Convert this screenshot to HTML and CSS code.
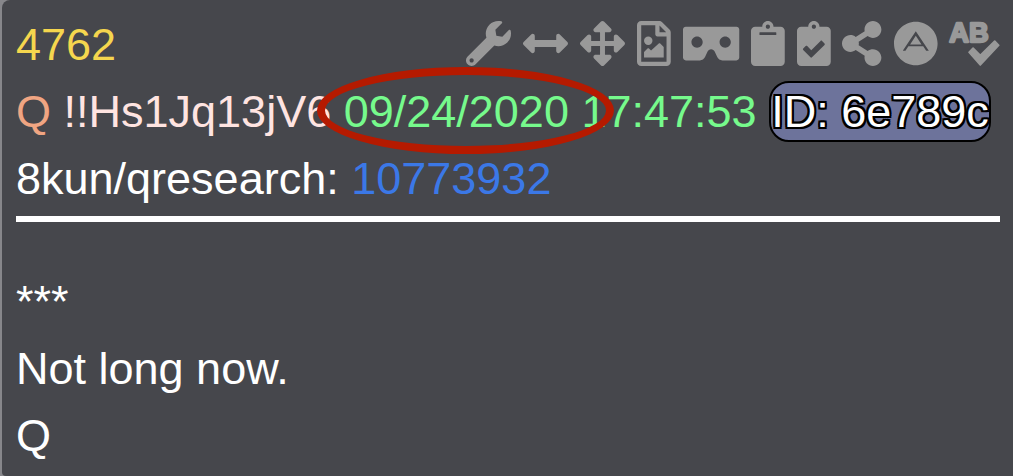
FILE: index.html
```
<!DOCTYPE html>
<html lang="en">
<head>
  <meta charset="UTF-8" />
  <meta name="viewport" content="width=device-width, initial-scale=1.0"/>
  <title>4762</title>
  <link rel="stylesheet" href="styles.css">
</head>
<body>
  <article class="post">
    <header class="post-header">
      <div class="top-row">
        <span class="number">4762</span>
        <div class="tools">
          <button type="button" aria-label="Settings">
            <svg viewBox="0 0 512 512"><path d="M507.73 109.1c-2.24-9.03-13.54-12.09-20.12-5.51l-74.36 74.36-67.88-11.31-11.31-67.88 74.36-74.36c6.62-6.62 3.43-17.9-5.66-20.16-47.38-11.74-99.55.91-136.58 37.93-39.64 39.64-50.55 97.1-34.05 147.2L18.74 402.76c-24.99 24.99-24.99 65.51 0 90.5 24.99 24.99 65.51 24.99 90.5 0l213.21-213.21c50.12 16.71 107.47 5.68 147.37-34.22 37.07-37.07 49.7-89.32 37.91-136.73zM64 472c-13.25 0-24-10.75-24-24 0-13.26 10.75-24 24-24s24 10.74 24 24c0 13.25-10.75 24-24 24z"/></svg>
          </button>
          <button type="button" aria-label="Widen">
            <svg viewBox="0 0 512 512"><path d="M377.941 169.941V216H134.059v-46.059c0-21.382-25.851-32.09-40.971-16.971L7.029 239.029c-9.373 9.373-9.373 24.568 0 33.941l86.059 86.059c15.119 15.119 40.971 4.411 40.971-16.971V296h243.882v46.059c0 21.382 25.851 32.09 40.971 16.971l86.059-86.059c9.373-9.373 9.373-24.568 0-33.941l-86.059-86.059c-15.119-15.12-40.971-4.412-40.971 16.97z"/></svg>
          </button>
          <button type="button" aria-label="Move">
            <svg viewBox="0 0 512 512"><path d="M352.201 425.775l-79.196 79.196c-9.373 9.373-24.568 9.373-33.941 0l-79.196-79.196c-15.119-15.119-4.411-40.971 16.971-40.97h51.162L228 284H127.196v51.162c0 21.382-25.851 32.09-40.971 16.971L7.029 272.937c-9.373-9.373-9.373-24.569 0-33.941L86.225 159.8c15.119-15.119 40.971-4.411 40.971 16.971V228H228V127.196h-51.23c-21.382 0-32.09-25.851-16.971-40.971l79.196-79.196c9.373-9.373 24.568-9.373 33.941 0l79.196 79.196c15.119 15.119 4.411 40.971-16.971 40.971h-51.162V228h100.804v-51.162c0-21.382 25.851-32.09 40.97-16.971l79.196 79.196c9.373 9.373 9.373 24.569 0 33.941L425.773 352.2c-15.119 15.119-40.971 4.411-40.97-16.971V284H284v100.804h51.23c21.382 0 32.09 25.851 16.971 40.971z"/></svg>
          </button>
          <button type="button" aria-label="Save as image">
            <svg viewBox="0 0 384 512"><path d="M369.9 97.98L286.02 14.1c-9-9-21.2-14.1-33.89-14.1H47.99C21.5.1 0 21.6 0 48.09v415.92C0 490.5 21.5 512 47.99 512h288.02c26.49 0 47.99-21.5 47.99-47.99V131.97c0-12.69-5.1-24.99-14.1-33.99zM256.03 51.99l76.08 76.08h-76.08V51.99zM336 464H48V48.09h160.13V152.1c0 13.3 10.7 24 24 24H336V464z"/><circle cx="128" cy="224" r="48"/><path d="M80 416v-64l39.5-39.5c4.7-4.7 12.3-4.7 17 0L160 336l87.5-79.5c4.7-4.7 12.3-4.7 17 0L304 296v120z"/></svg>
          </button>
          <button type="button" aria-label="Viewer">
            <svg viewBox="0 0 640 512"><path d="M608 64H32C14.33 64 0 78.33 0 96v320c0 17.67 14.33 32 32 32h160.22c25.19 0 48.03-14.77 58.36-37.74l27.74-61.64C286.21 331.08 302.35 320 320 320s33.79 11.08 41.68 28.62l27.74 61.64C399.75 433.23 422.6 448 447.78 448H608c17.67 0 32-14.33 32-32V96c0-17.67-14.33-32-32-32zM160 304c-35.35 0-64-28.65-64-64s28.65-64 64-64 64 28.65 64 64-28.65 64-64 64zm320 0c-35.35 0-64-28.65-64-64s28.65-64 64-64 64 28.65 64 64-28.65 64-64 64z"/></svg>
          </button>
          <button type="button" aria-label="Copy">
            <svg viewBox="0 0 384 512"><path d="M384 112v352c0 26.51-21.49 48-48 48H48c-26.51 0-48-21.49-48-48V112c0-26.51 21.49-48 48-48h80c0-35.29 28.71-64 64-64s64 28.71 64 64h80c26.51 0 48 21.49 48 48zM192 40c-13.255 0-24 10.745-24 24s10.745 24 24 24 24-10.745 24-24-10.745-24-24-24m96 114v-20a6 6 0 0 0-6-6H102a6 6 0 0 0-6 6v20a6 6 0 0 0 6 6h180a6 6 0 0 0 6-6z"/></svg>
          </button>
          <button type="button" aria-label="Copy checked">
            <svg viewBox="0 0 384 512"><path d="M336 64h-80c0-35.3-28.7-64-64-64s-64 28.7-64 64H48C21.5 64 0 85.5 0 112v352c0 26.5 21.5 48 48 48h288c26.5 0 48-21.5 48-48V112c0-26.5-21.5-48-48-48zM192 40c13.3 0 24 10.7 24 24s-10.7 24-24 24-24-10.7-24-24 10.7-24 24-24zm121.2 231.8l-143 141.8c-4.7 4.7-12.3 4.6-17-.1l-82.6-83.3c-4.7-4.7-4.6-12.3.1-17L99.1 285c4.7-4.7 12.3-4.6 17 .1l46 46.4 106-105.2c4.7-4.7 12.3-4.6 17 .1l28.2 28.4c4.7 4.8 4.6 12.3-.1 17z"/></svg>
          </button>
          <button type="button" aria-label="Share">
            <svg viewBox="0 0 448 512"><path d="M352 320c-22.608 0-43.387 7.819-59.79 20.895l-102.486-64.054a96.551 96.551 0 0 0 0-41.683l102.486-64.054C308.613 184.181 329.392 192 352 192c53.019 0 96-42.981 96-96S405.019 0 352 0s-96 42.981-96 96c0 7.158.79 14.13 2.276 20.841L155.79 180.895C139.387 167.819 118.608 160 96 160c-53.019 0-96 42.981-96 96s42.981 96 96 96c22.608 0 43.387-7.819 59.79-20.895l102.486 64.054A96.301 96.301 0 0 0 256 416c0 53.019 42.981 96 96 96s96-42.981 96-96-42.981-96-96-96z"/></svg>
          </button>
          <button type="button" aria-label="Answers">
            <svg viewBox="0 0 496 512"><path d="M248 167.5l64.9 98.8H183.1l64.9-98.8zM496 256c0 136.9-111.1 248-248 248S0 392.9 0 256 111.1 8 248 8s248 111.1 248 248zm-99.8 82.7L248 115.5 99.8 338.7h30.4l33.6-51.7h168.6l33.6 51.7h30.2z"/></svg>
          </button>
          <button type="button" aria-label="Spell check">
            <svg viewBox="0 0 576 512"><text class="ab" x="4" y="240">AB</text><path class="tick" d="M228 356l46-46 82 82 164-162 46 46-210 224z"/></svg>
          </button>
        </div>
      </div>
      <div class="meta">
        <span class="name">Q</span>
        <span class="trip">!!Hs1Jq13jV6</span>
        <time class="date" datetime="2020-09-24T17:47:53"><span class="circled">09/24/2020</span> 17:47:53</time>
        <span class="poster-id">ID: 6e789c</span>
      </div>
      <div class="source">8kun/qresearch: <a href="#10773932">10773932</a></div>
    </header>
    <div class="post-body">
      <p>***</p>
      <p>Not long now.</p>
      <p>Q</p>
    </div>
  </article>
</body>
</html>
```
FILE: styles.css
```
* {
  margin: 0;
  padding: 0;
  box-sizing: border-box;
}

body {
  background: #87878b;
  font-family: "Liberation Sans", Helvetica, Arial, sans-serif;
  font-size: 45px;
  line-height: 67px;
  color: #fff;
}

.post {
  min-height: 100vh;
  margin-left: 2px;
  padding: 11px 13px 6px 14px;
  background: #46474c;
  border-radius: 8px 0 0 4px;
}

.post-header {
  padding-bottom: 4px;
  border-bottom: 6px solid #fff;
}

.top-row {
  display: flex;
  justify-content: space-between;
}

.number {
  color: #f5d64e;
}

.tools {
  display: flex;
  gap: 12px;
  padding-top: 10px;
}

.tools button {
  height: 45px;
  background: none;
  border: none;
  color: #999;
  cursor: pointer;
}

.tools svg {
  display: block;
  height: 45px;
  fill: currentColor;
  overflow: visible;
}

.ab {
  font-size: 310px;
  font-weight: bold;
  stroke: currentColor;
  stroke-width: 26px;
  stroke-linejoin: round;
}

.tick {
  stroke: currentColor;
  stroke-width: 20px;
  stroke-linejoin: round;
}

.name {
  color: #f0a582;
}

.trip {
  color: #ffe4e1;
}

.date {
  color: #76fa8c;
}

.circled {
  display: inline-block;
  position: relative;
}

/* red ring drawn over the date */
.circled::after {
  content: "";
  position: absolute;
  inset: -11px -45px -9px -27px;
  border: 8px solid #b51a00;
  border-radius: 50%;
}

.poster-id {
  display: inline-block;
  line-height: 57px;
  background: #6d739b;
  border: 2px solid #000;
  border-radius: 20px;
  text-shadow: 2px 0 #000, -2px 0 #000, 0 2px #000, 0 -2px #000,
    2px 2px #000, -2px 2px #000, 2px -2px #000, -2px -2px #000;
}

.source a {
  color: #3b78e7;
  text-decoration: none;
}

.post-body {
  padding-top: 46px;
}
```
